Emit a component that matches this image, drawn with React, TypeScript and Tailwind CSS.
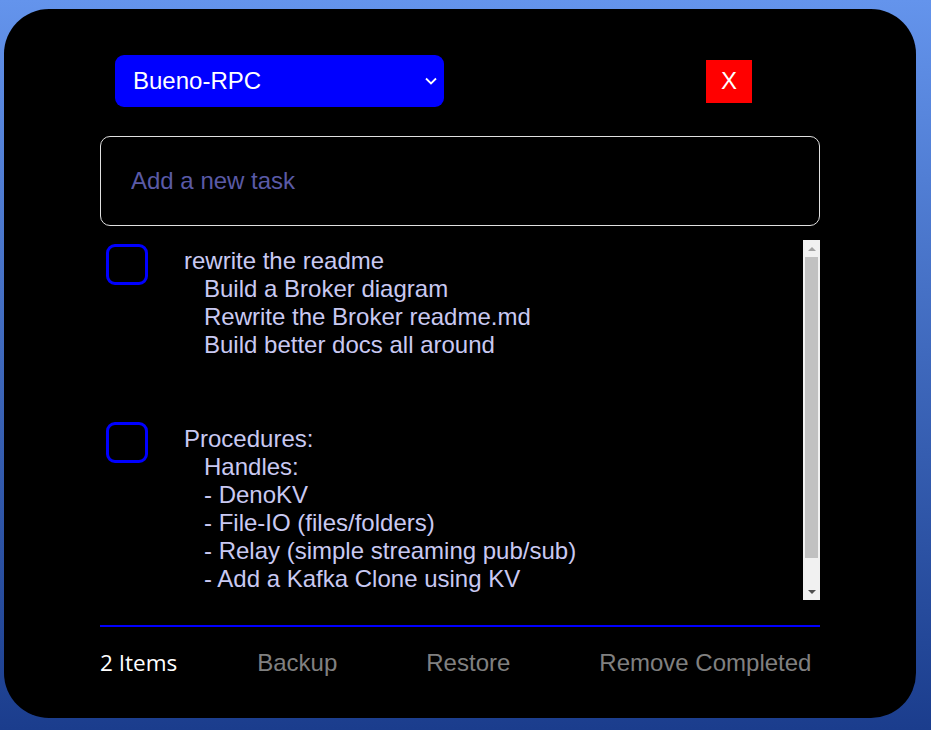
import { useState } from "react";

interface Task {
  id: number;
  text: string;
  done: boolean;
}

const initialTasks: Task[] = [
  {
    id: 1,
    text: "rewrite the readme\n   Build a Broker diagram\n   Rewrite the Broker readme.md\n   Build better docs all around",
    done: false,
  },
  {
    id: 2,
    text: "Procedures:\n   Handles:\n   - DenoKV\n   - File-IO (files/folders)\n   - Relay (simple streaming pub/sub)\n   - Add a Kafka Clone using KV\n",
    done: false,
  },
];

const arial = "font-['Liberation_Sans',Arial,sans-serif]";

const FakeScrollbar = () => (
  <div className="flex w-[17px] shrink-0 flex-col bg-[#f1f1f1]">
    <div className="flex h-[17px] items-center justify-center">
      <div className="h-0 w-0 border-x-[4px] border-b-[4px] border-x-transparent border-b-[#a3a3a3]" />
    </div>
    <div className="mx-[2px] h-[301px] bg-[#c1c1c1]" />
    <div className="flex flex-1 items-end justify-center pb-[6px]">
      <div className="h-0 w-0 border-x-[4px] border-t-[4px] border-x-transparent border-t-[#505050]" />
    </div>
  </div>
);

const App = () => {
  const [tasks, setTasks] = useState<Task[]>(initialTasks);
  const [newTask, setNewTask] = useState("");

  const toggle = (id: number) => {
    setTasks(tasks.map((t) => (t.id === id ? { ...t, done: !t.done } : t)));
  };

  return (
    <div className="min-h-screen bg-gradient-to-b from-[#6494ec] to-[#1b3d8d] pl-[4px] pt-[9px]">
      <div
        className={`flex h-[709px] w-[912px] flex-col rounded-[45px] bg-black px-[96px] ${arial}`}
      >
        {/* Header */}
        <div className="mt-[46px] flex h-[52px] items-center">
          <div className="relative ml-[15px] h-[52px] w-[329px]">
            <select className="h-full w-full appearance-none rounded-[9px] bg-[#0000ff] pl-[18px] text-[24px] text-white outline-none">
              <option>Bueno-RPC</option>
            </select>
            <svg
              className="pointer-events-none absolute right-[7px] top-[22px]"
              width="12"
              height="8"
              viewBox="0 0 12 8"
            >
              <path d="M1 1.5 L6 6.5 L11 1.5" fill="none" stroke="white" strokeWidth="1.8" />
            </svg>
          </div>
          <button className="ml-[262px] flex h-[43px] w-[46px] items-center justify-center bg-[#ff0000] text-[24px] text-white">
            X
          </button>
        </div>

        {/* New task */}
        <input
          value={newTask}
          onChange={(e) => setNewTask(e.target.value)}
          placeholder="Add a new task"
          className="mt-[29px] h-[90px] w-full rounded-[10px] border border-[#e0e0e0] bg-black pl-[30px] text-[24px] text-[#c9c9f2] outline-none placeholder:text-[#5a5aa6]"
        />

        {/* Task list */}
        <div className="mt-[14px] flex h-[360px]">
          <div className="flex flex-1 flex-col gap-[63px] overflow-hidden pl-[6px] pt-[4px]">
            {tasks.map((task) => (
              <div key={task.id} className="flex items-start">
                <button
                  onClick={() => toggle(task.id)}
                  className={`h-[41px] w-[42px] shrink-0 rounded-[9px] border-[3px] border-[#0000ff] ${
                    task.done ? "bg-[#0000ff]" : "bg-transparent"
                  }`}
                />
                <div className="ml-[36px] mt-[3px] whitespace-pre-wrap text-[24px] leading-[28px] text-[#c9c9f2]">
                  {task.text}
                </div>
              </div>
            ))}
          </div>
          <FakeScrollbar />
        </div>

        <div className="mt-[25px] h-[2px] w-full bg-[#0000ff]" />

        {/* Footer */}
        <div className="mt-[22px] flex h-[28px] items-center text-[24px] leading-[28px]">
          <span className="font-['Open_Sans',sans-serif] text-[22.5px] text-white">
            {tasks.length} Items
          </span>
          <button className="ml-[80px] text-[#808080]">Backup</button>
          <button className="ml-[89px] text-[#808080]">Restore</button>
          <button className="ml-[89px] text-[#808080]">Remove Completed</button>
        </div>
      </div>
    </div>
  );
};

export default App;
